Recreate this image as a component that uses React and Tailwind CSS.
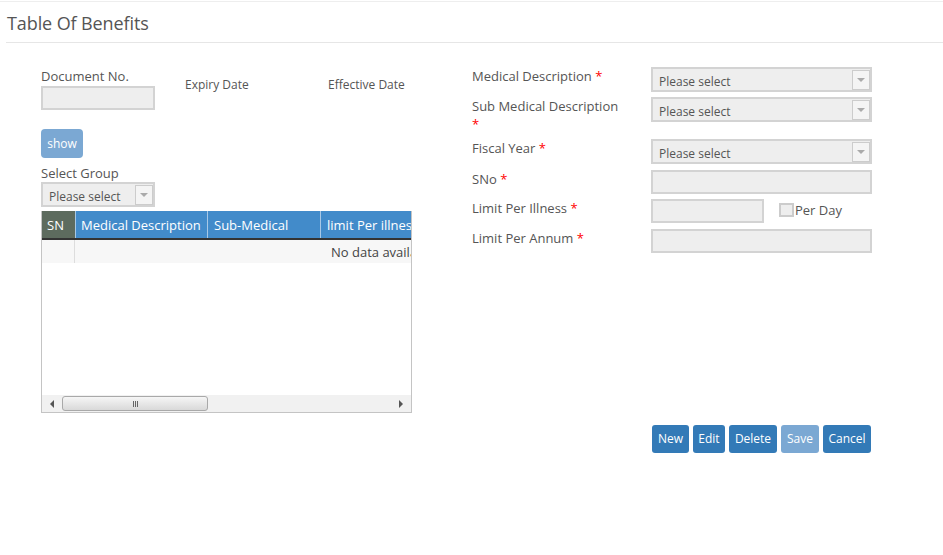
import React from 'react'

function Select({ w }) {
  return (
    <div className={`${w} h-[25px] border-2 border-[#d3d3d3] bg-[#eee] flex items-center`}>
      <span className="flex-1 pl-[6px] pt-[4px] text-[12px] text-[#555] leading-none">Please select</span>
      <div className="w-[18px] h-[20px] border border-[#ccc] bg-[#f4f4f4] flex items-center justify-center">
        <div className="w-0 h-0 border-l-[4px] border-r-[4px] border-t-[4px] border-l-transparent border-r-transparent border-t-[#aaa]" />
      </div>
    </div>
  )
}

function Input({ w }) {
  return <div className={`${w} h-[24px] border-2 border-[#d3d3d3] bg-[#eee]`} />
}

function Label({ text, className = '' }) {
  return (
    <div className={`text-[13px] leading-[18px] text-[#555] ${className}`}>
      {text} <span className="text-[#f00]">*</span>
    </div>
  )
}

export default function App() {
  return (
    <div className="w-[943px] h-[555px] bg-white overflow-hidden" style={{ fontFamily: '"Open Sans", sans-serif' }}>
      {/* Title */}
      <div className="mt-[1px] border-t border-[#eee]">
        <div className="ml-[6px] pt-[9px] pb-[7px] border-b border-[#e6e6e6]">
          <h1 className="pl-[1px] text-[18px] leading-[24px] text-[#555] tracking-[-0.1px]">Table Of Benefits</h1>
        </div>
      </div>

      <div className="flex items-start">
        {/* Left column */}
        <div className="ml-[41px] w-[371px] pt-[22px]">
          <div className="flex items-start">
            <div className="w-[144px]">
              <div className="pt-[2px] text-[13px] leading-[18px] text-[#555]">Document No.</div>
              <div className="mt-[1px]">
                <Input w="w-[114px]" />
              </div>
            </div>
            <div className="w-[143px] mt-[11px] text-[12px] leading-[18px] text-[#555]">Expiry Date</div>
            <div className="mt-[11px] text-[12px] leading-[18px] text-[#555]">Effective Date</div>
          </div>

          <button className="mt-[19px] w-[42px] h-[29px] rounded-[4px] bg-[#7ba8d3] text-white text-[12px] flex items-center justify-center">
            show
          </button>

          <div className="mt-[6px] text-[13px] leading-[18px] text-[#555]">Select Group</div>
          <div>
            <Select w="w-[114px]" />
          </div>

          {/* Table */}
          <div className="mt-[4px] w-[371px] border-r border-b border-l border-[#c4c4c4] overflow-hidden">
            <div className="flex h-[27px] text-[13px] text-white whitespace-nowrap">
              <div className="w-[33px] shrink-0 bg-[#5d6b5e] pl-[5px] pt-[3px] flex items-center">SN</div>
              <div className="w-[132px] shrink-0 bg-[#428bca] border-l border-[#a8c8e6] pl-[5px] pt-[3px] flex items-center">Medical Description</div>
              <div className="w-[113px] shrink-0 bg-[#428bca] border-l border-[#a8c8e6] pl-[6px] pt-[3px] flex items-center">Sub-Medical</div>
              <div className="w-[160px] shrink-0 bg-[#428bca] border-l border-[#a8c8e6] pl-[6px] pt-[3px] flex items-center">limit Per illness</div>
            </div>
            <div className="h-[2px] bg-[#333]" />
            <div className="flex h-[23px] bg-[#f7f7f7] text-[13px] text-[#444] whitespace-nowrap">
              <div className="w-[33px] shrink-0 border-r border-[#ddd]" />
              <div className="pl-[256px] pt-[3px] flex items-center">No data available in table</div>
            </div>
            <div className="h-[132px] bg-white" />
            {/* Scrollbar */}
            <div className="h-[17px] bg-[#f1f1f1] flex items-center">
              <div className="w-[20px] flex justify-center">
                <div className="w-0 h-0 border-t-[4px] border-b-[4px] border-r-[4px] border-t-transparent border-b-transparent border-r-[#555]" />
              </div>
              <div className="w-[146px] h-[15px] rounded-[3px] border border-[#a9a9a9] bg-gradient-to-b from-[#f6f6f6] to-[#d9d9d9] flex items-center justify-center gap-[1px]">
                <div className="w-[1px] h-[6px] bg-[#666]" />
                <div className="w-[1px] h-[6px] bg-[#666]" />
                <div className="w-[1px] h-[6px] bg-[#666]" />
              </div>
              <div className="flex-1" />
              <div className="w-[20px] flex justify-center">
                <div className="w-0 h-0 border-t-[4px] border-b-[4px] border-l-[4px] border-t-transparent border-b-transparent border-l-[#555]" />
              </div>
            </div>
          </div>
        </div>

        {/* Right column */}
        <div className="ml-[60px] w-[400px] pt-[24px]">
          <div className="flex items-start h-[30px]">
            <Label text="Medical Description" className="w-[179px]" />
            <Select w="w-[221px]" />
          </div>
          <div className="flex items-start h-[42px]">
            <div className="w-[179px]">
              <Label text="Sub Medical Description" className="w-[152px]" />
            </div>
            <Select w="w-[221px]" />
          </div>
          <div className="flex items-start h-[31px]">
            <Label text="Fiscal Year" className="w-[179px]" />
            <Select w="w-[221px]" />
          </div>
          <div className="flex items-start h-[29px]">
            <Label text="SNo" className="w-[179px]" />
            <Input w="w-[221px]" />
          </div>
          <div className="flex items-start h-[30px]">
            <Label text="Limit Per Illness" className="w-[179px]" />
            <Input w="w-[113px]" />
            <div className="ml-[15px] mt-[4px] flex items-center">
              <div className="w-[15px] h-[14px] border-2 border-[#ccc] bg-[#eee]" />
              <span className="ml-[1px] text-[13px] leading-[14px] text-[#555]">Per Day</span>
            </div>
          </div>
          <div className="flex items-start h-[24px]">
            <Label text="Limit Per Annum" className="w-[179px]" />
            <Input w="w-[221px]" />
          </div>

          <div className="mt-[172px] ml-[180px] flex gap-[4px] text-[12px] text-white">
            <button className="w-[37px] h-[28px] rounded-[3px] bg-[#337ab7]">New</button>
            <button className="w-[32px] h-[28px] rounded-[3px] bg-[#337ab7]">Edit</button>
            <button className="w-[48px] h-[28px] rounded-[3px] bg-[#337ab7]">Delete</button>
            <button className="w-[38px] h-[28px] rounded-[3px] bg-[#7ba8d3]">Save</button>
            <button className="w-[48px] h-[28px] rounded-[3px] bg-[#337ab7]">Cancel</button>
          </div>
        </div>
      </div>
    </div>
  )
}
